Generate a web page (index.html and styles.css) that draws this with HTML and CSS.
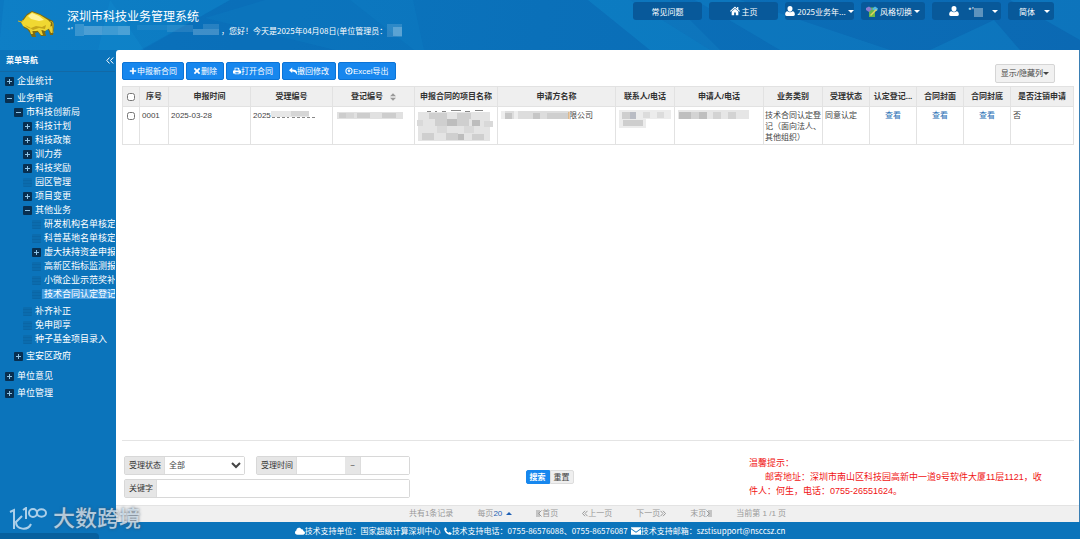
FILE: index.html
```html
<!DOCTYPE html>
<html lang="zh-CN">
<head>
<meta charset="utf-8">
<title>深圳市科技业务管理系统</title>
<link rel="stylesheet" href="styles.css">
</head>
<body>
<svg class="defs" aria-hidden="true">
  <symbol id="plus" viewBox="0 0 10 10"><path d="M4 1h2v3h3v2H6v3H4V6H1V4h3z"/></symbol>
  <symbol id="times" viewBox="0 0 10 10"><path d="M2.500 1 5 3.300 7.500 1 9 2.500 6.700 5 9 7.500 7.500 9 5 6.700 2.500 9 1 7.500 3.300 5 1 2.500z"/></symbol>
  <symbol id="print" viewBox="0 0 10 10"><path fill-rule="evenodd" d="M2 1h5l1 1v2h1l1 1v3H8v1H2V8H0V5l1-1h1zM3 2v2.500h4V3H6V2zM3 6.500V8h4V6.500z"/></symbol>
  <symbol id="reply" viewBox="0 0 10 10"><path d="M0 4 4 .500V3c4 0 6 1.500 6 4 0 1-.4 2-1 2.500C9 6.500 7 5.500 4 5.500v2z"/></symbol>
  <symbol id="circle-down" viewBox="0 0 10 10"><path fill-rule="evenodd" d="M5 .500a4.500 4.500 0 1 1 0 9 4.500 4.500 0 0 1 0-9zm0 1.300a3.200 3.200 0 1 0 0 6.400 3.200 3.200 0 0 0 0-6.400zM4 3h2v1.500h1.300L5 7 2.700 4.500H4z"/></symbol>
  <symbol id="home" viewBox="0 0 12 11"><path d="M6 0 0 5.500l.8.8L6 1.800l5.200 4.500.8-.8-2-1.800V.800H8.500v1.600zM6 2.800 2 6.200V10.500h3V7.300h2v3.200h3V6.200z"/></symbol>
  <symbol id="user" viewBox="0 0 12 12"><path d="M6 0c2 0 3 1.400 3 3.200S7.900 6.800 6 6.800 3 5 3 3.200 4 0 6 0zM3 6.300c1.600 1.700 4.400 1.700 6 0 2 .2 2.800 1.700 2.800 3.700 0 1.200-.6 2-1.800 2H2C.8 12 .2 11.200.2 10 .2 8 1 6.500 3 6.300z"/></symbol>
  <symbol id="cloud" viewBox="0 0 12 9"><path d="M3 9C1 9 0 7.800 0 6.300c0-1.200.8-2 1.600-2.300C1.600 1.800 3 .500 4.800.500c1.500 0 2.500.8 3 2 1.400-.4 2.400.6 2.200 2 1.300.2 2 1.100 2 2.200C12 8 11 9 9.700 9z"/></symbol>
  <symbol id="phone" viewBox="0 0 10 10"><path d="M.5 1.500C1 .800 1.600.500 2.300.300L3.700 3l-1 1.200C3.300 5.600 4.400 6.700 5.800 7.300L7 6.300l2.700 1.400c-.2.700-.5 1.300-1.200 1.800C7.500 10 6 9.600 4.500 8.700 3 7.800 2 6.800 1.300 5.500.4 4 0 2.500.5 1.500z"/></symbol>
  <symbol id="mail" viewBox="0 0 12 9"><path d="M0 0h12v1.200L6 5.300 0 1.200zM0 2.500l6 4 6-4V9H0z"/></symbol>
</svg>

<header class="top">
  <svg class="facets" viewBox="0 0 1080 50" preserveAspectRatio="none" aria-hidden="true">
    <path fill="#1598d8" fill-opacity=".22" d="M4 0h106l34 50H0V38z"/>
    <path fill="#1598d8" fill-opacity=".2" d="M110 0h120l-90 50H98z"/>
    <path fill="#0559a6" fill-opacity=".18" d="M230 0h120l64 50H142z"/>
    <path fill="#1598d8" fill-opacity=".14" d="m205 18 60-18h148l11 50H335z"/>
    <path fill="#1598d8" fill-opacity=".3" d="M588 0h42l80 50h-60z"/>
    <path fill="#1fa0dc" fill-opacity=".15" d="M630 0h40l50 50h-10z"/>
    <path fill="#1598d8" fill-opacity=".22" d="m695 0 45 0 150 50h-110z"/>
    <path fill="#1598d8" fill-opacity=".25" d="m930 50 64-30 26 30zM1010 0h70v40z"/>
  </svg>
  <svg class="bull" viewBox="0 0 38 28" role="img" aria-label="金牛标志">
    <path fill="#7d6a10" d="M0 10.500 4 12l2-3 4-5 5-3 8 3 9 5 4 2 1 5-1 9h-3l-1-4-2-2-2 3 1 4h-5l-3-4-3 1 1 4h-4l-2-4-3-4-3-1-1-3-3-3z"/>
    <path fill="#f0d832" d="m4 12.500 3-3 3-4L15 2l8 3 8 5 3 3-1 5-5 3-3-1-6 1-5 0-4-3-4-2-1-2z"/>
    <path fill="#fff49a" d="m11 6 4-3 7 3 5 4-5 1-8-2z"/>
    <path fill="#c6a51b" d="m8 15 6 3 5-2 6 1 4-2-1 4-6-1-6 2-6-3z"/>
    <path fill="#e9cf36" d="m12 18 2 6h2l-1-5zM20 20l4 5h2l-2-6zM31 17l3 6h1l0-7z"/>
    <path fill="none" stroke="#d4b92b" d="M33 12c2-1 3 0 3 3s-1 5 0 8M1 11l4 1 1-2"/>
  </svg>
  <div class="brand">
    <h1>深圳市科技业务管理系统</h1>
    <p class="hello"><span>*'</span>
      <svg class="name-mask" viewBox="0 0 148 13" aria-hidden="true"><g fill="#fff">
        <path fill-opacity=".18" d="M2 0h9v12H2z"/><path fill-opacity=".26" d="M11 2h18v9H11z"/><path fill-opacity=".2" d="M29 2h16v9H29z"/><path fill-opacity=".25" d="M45 2h12v9H45z"/><path fill-opacity=".06" d="M64 1h30v5H64z"/><path fill-opacity=".1" d="M94 1h26v7H94z"/><path fill-opacity=".22" d="M120 5h26v6h-26z"/><path fill-opacity=".12" d="M130 0h16v5h-16z"/></g></svg>
      <span>，您好！今天是2025年04月08日(单位管理员：</span>
      <svg class="role-mask" viewBox="0 0 15 13" aria-hidden="true"><path fill="#fff" fill-opacity=".14" d="M0 0h15v13H0z"/><path fill="#fff" fill-opacity=".22" d="M6 3h9v9H6z"/></svg>
    </p>
  </div>
  <nav class="tools" aria-label="快捷操作">
    <button type="button">常见问题</button>
    <button type="button"><svg class="ico"><use href="#home"/></svg>主页</button>
    <button type="button"><svg class="ico"><use href="#user"/></svg>2025业务年...<i class="caret"></i></button>
    <button type="button" class="t-theme">
      <svg class="shirt" viewBox="0 0 12 11" aria-hidden="true"><path fill="#69b84b" d="M3 1.500h6V11H3z"/><path fill="#8d7bd0" d="M0 2 3 .500 6 3 3 6 0 4z"/><path fill="#4fb8e8" d="m9 .500 3 2-1 2.500-2 0-3-2z"/><path fill="#e8d45c" d="m4 9 6-6 1 1-6 6z"/></svg>
      风格切换<i class="caret"></i></button>
    <button type="button" class="t-user"><svg class="ico"><use href="#user"/></svg><span>*'<svg class="u-mask" viewBox="0 0 9 9" aria-hidden="true"><path fill="#fff" fill-opacity=".35" d="M0 0h9v9H0z"/></svg></span><i class="caret"></i></button>
    <button type="button" class="t-lang">简体<i class="caret"></i></button>
  </nav>
</header>

<div class="body">
  <aside class="side">
    <div class="side-head"><h2>菜单导航</h2><button type="button" aria-label="收起菜单"><svg viewBox="0 0 8 7"><path d="M3.500.500.800 3.500l2.700 3M7.200.500 4.500 3.500l2.700 3"/></svg></button></div>
    <ul class="tree">
      <li><a href="#" class="plus">企业统计</a></li>
      <li><a href="#" class="minus">业务申请</a>
        <ul>
          <li><a href="#" class="minus">市科技创新局</a>
            <ul>
              <li><a href="#" class="plus">科技计划</a></li>
              <li><a href="#" class="plus">科技政策</a></li>
              <li><a href="#" class="plus">训力券</a></li>
              <li><a href="#" class="plus">科技奖励</a></li>
              <li><a href="#" class="leaf">园区管理</a></li>
              <li><a href="#" class="plus">项目变更</a></li>
              <li><a href="#" class="minus">其他业务</a>
                <ul>
                  <li><a href="#" class="leaf">研发机构名单核定</a></li>
                  <li><a href="#" class="leaf">科普基地名单核定</a></li>
                  <li><a href="#" class="plus">虚大扶持资金申报</a></li>
                  <li><a href="#" class="leaf">高新区指标监测报</a></li>
                  <li><a href="#" class="leaf">小微企业示范奖补</a></li>
                  <li><a href="#" class="leaf"><span class="on">技术合同认定登记</span></a></li>
                </ul>
              </li>
              <li><a href="#" class="leaf">补齐补正</a></li>
              <li><a href="#" class="leaf">免申即享</a></li>
              <li><a href="#" class="leaf">种子基金项目录入</a></li>
            </ul>
          </li>
          <li><a href="#" class="plus">宝安区政府</a></li>
        </ul>
      </li>
      <li><a href="#" class="plus">单位意见</a></li>
      <li><a href="#" class="plus">单位管理</a></li>
    </ul>
  </aside>

  <main class="main">
    <div class="bar">
      <div class="acts">
        <button type="button"><svg class="ico"><use href="#plus"/></svg>申报新合同</button>
        <button type="button"><svg class="ico"><use href="#times"/></svg>删除</button>
        <button type="button"><svg class="ico"><use href="#print"/></svg>打开合同</button>
        <button type="button"><svg class="ico"><use href="#reply"/></svg>撤回修改</button>
        <button type="button"><svg class="ico"><use href="#circle-down"/></svg>Excel导出</button>
      </div>
      <button type="button" class="cols">显示/隐藏列<i class="caret"></i></button>
    </div>

    <div class="grid">
      <table>
        <colgroup><col class="w17"><col class="w29"><col class="w82"><col class="w82"><col class="w82"><col class="w83"><col class="w118"><col class="w59"><col class="w89"><col class="w59"><col class="w47"><col class="w47"><col class="w47"><col class="w47"><col></colgroup>
        <thead>
          <tr><th><input type="checkbox" aria-label="全选"></th><th>序号</th><th>申报时间</th><th>受理编号</th><th>登记编号<svg class="sort" viewBox="0 0 6 8"><path d="M0 3.300 3 .300l3 3zM0 4.700l3 3 3-3z"/></svg></th><th>申报合同的项目名称</th><th>申请方名称</th><th>联系人/电话</th><th>申请人/电话</th><th>业务类别</th><th>受理状态</th><th>认定登记...</th><th>合同封面</th><th>合同封底</th><th>是否注销申请</th></tr>
        </thead>
        <tbody>
          <tr>
            <td class="mid"><input type="checkbox" aria-label="选择 0001"></td>
            <td>0001</td>
            <td>2025-03-28</td>
            <td>2025<svg class="m-no" viewBox="0 0 46 8" aria-hidden="true"><path fill="#e7e7e7" d="M0 0h38v6H0z"/><path fill="#d6d6d6" d="M20 0h18v5H20z"/><path fill="#888" d="M1 6h3v1H1zm5 0h3v1H6zm5 0h3v1h-3zm5 0h2v1h-2zm5 0h3v1h-3zm5 0h3v1h-3zm5 0h3v1h-3zm5 0h3v1h-3zm5 0h3v1h-3z"/></svg></td>
            <td><svg class="m-reg" viewBox="0 0 66 7" aria-hidden="true"><path fill="#e1e1e1" d="M0 0h66v7H0z"/><path fill="#cdcdcd" d="M2 1h7v5H2zm18 0h13v5H20zm25 0h14v5H45z"/><path fill="#d6d6d6" d="M9 1h8v5H9z"/></svg></td>
            <td><svg class="m-proj" viewBox="0 0 77 32" aria-hidden="true"><path fill="#888" d="M10 1h4v1h-4zm8 0h2v1h-2zm7 0h4v1h-4zm9-1h10v1H34zm14 1h5v1h-5zm10-1h8v1h-8z"/><path fill="#e4e4e4" d="M1 2h72v29H1z"/><path fill="#cfcfcf" d="M12 3h18v6H12zm28 0h14v6H40zM18 9h12v7H18zm22 0h12v7H40zm-35 14h12v7H5zm24 0h12v7H29zm26 1h12v6H55z"/><path fill="#bdbdbd" d="M30 9h10v7H30zm25 1h8v6h-8zM41 24h6v6h-6z"/><path fill="#d9d9d9" d="M0 10h6v6H0zm47 6h10v7H47zM20 16h10v7H20zm47-5h9v6h-9z"/></svg></td>
            <td><svg class="m-org" viewBox="0 0 68 8" aria-hidden="true"><path fill="#ddd" d="M0 0h68v8H0z"/><path fill="#eee" d="M0 0h4v8H0zm13 0h4v8h-4z"/><path fill="#c6c6c6" d="M4 2h7v6H4zm28 0h7v6h-7z"/><path fill="#cfcfcf" d="M46 2h21v6H46z"/><path fill="#d9b98e" d="M67 1h1v7h-1z"/></svg>限公司</td>
            <td><svg class="m-tel" viewBox="0 0 52 19" aria-hidden="true"><path fill="#ececec" d="M0 0h52v9H0zM0 9h27v9H0z"/><path fill="#cecece" d="M3 2h14v7H3zm1 8h20v6H4z"/><path fill="#b9bcc4" d="M11 2h6v7h-6z"/><path fill="#dcdcdc" d="M24 2h7v6h-7zm14 0h7v6h-7z"/></svg></td>
            <td><svg class="m-app" viewBox="0 0 71 9" aria-hidden="true"><path fill="#e6e6e6" d="M0 0h71v9H0z"/><path fill="#bfbfbf" d="M1 2h12v7H1zm20 0h8v7h-8z"/><path fill="#d3d3d3" d="M13 2h8v7h-8zm22 0h8v7h-8zm15 0h8v7h-8z"/></svg></td>
            <td class="kind">技术合同认定登记（面向法人、其他组织）</td>
            <td>同意认定</td>
            <td class="mid"><a href="#">查看</a></td>
            <td class="mid"><a href="#">查看</a></td>
            <td class="mid"><a href="#">查看</a></td>
            <td>否</td>
          </tr>
        </tbody>
      </table>
    </div>

    <form class="query">
      <div class="fields">
        <div class="field f-state"><label for="state">受理状态</label><select id="state"><option>全部</option></select></div>
        <div class="field f-date"><label for="from">受理时间</label><input id="from" type="text"><span class="tilde">~</span><input type="text" aria-label="受理时间止"></div>
        <div class="field f-key"><label for="key">关键字</label><input id="key" type="text"></div>
      </div>
      <div class="go"><button type="button" class="search">搜索</button><button type="reset">重置</button></div>
      <div class="tip"><p>温馨提示：</p><p class="addr">邮寄地址：深圳市南山区科技园高新中一道9号软件大厦11层1121，收件人：何生，电话：0755-26551624。</p></div>
    </form>

    <nav class="pager" aria-label="分页">
      <span>共有1条记录</span>
      <span>每页<a href="#">20<i class="up"></i></a></span>
      <span><svg class="pg" viewBox="0 0 6 7"><path d="M1 0v7M5.500.500 2.500 3.500l3 3M3 0v7"/></svg>首页</span>
      <span><svg class="pg" viewBox="0 0 6 7"><path d="M3 .800.500 3.500 3 6.200M5.500.800 3 3.500l2.500 2.700"/></svg>上一页</span>
      <span>下一页<svg class="pg" viewBox="0 0 6 7"><path d="M3 .800 5.500 3.500 3 6.200M.5.800 3 3.500.5 6.200"/></svg></span>
      <span>末页<svg class="pg" viewBox="0 0 6 7"><path d="M5 0v7M.5.500l3 3-3 3M3 0v7"/></svg></span>
      <span>当前第 1 /1 页</span>
    </nav>
  </main>
</div>

<footer class="foot">
  <span><svg class="ico wide"><use href="#cloud"/></svg>技术支持单位：国家超级计算深圳中心</span>
  <span><svg class="ico"><use href="#phone"/></svg>技术支持电话：0755-86576088、0755-86576087</span>
  <span><svg class="ico wide"><use href="#mail"/></svg>技术支持邮箱：szstisupport@nsccsz.cn</span>
</footer>

<div class="status"></div>
<div class="mark">
  <svg viewBox="0 0 38 24" aria-hidden="true"><path d="M1 5l4-2v19M13 9l-6 6c0 8 12 9 15 2M14 3l3-2v11"/><path d="M28 6a4 4 0 1 0-8 0 4 4 0 0 0 8 0c0-5 9-5 9 0s-9 5-9 0z"/></svg>
  <span>大数跨境</span>
</div>
</body>
</html>
```
FILE: styles.css
```css
* { box-sizing: border-box; }

body {
  margin: 0;
  height: 100vh;
  display: flex;
  flex-direction: column;
  overflow: hidden;
  background: #0b74bb;
  color: #444;
  font: 8px/11px "Liberation Sans", "Noto Sans CJK SC", sans-serif;
}

h1, h2, p, ul { margin: 0; padding: 0; font-weight: normal; }
ul { list-style: none; }
a { text-decoration: none; }
button, input, select { font: inherit; color: inherit; margin: 0; }
button { cursor: pointer; }
.defs { position: absolute; width: 0; height: 0; }
.ico { width: 8px; height: 8px; fill: currentColor; flex: none; }
.wide { width: 10px; }

.caret {
  border: 3px solid transparent;
  border-top-color: currentColor;
  border-bottom: 0;
}

/* header */
.top {
  position: relative;
  flex: none;
  height: 50px;
  display: flex;
  align-items: flex-start;
  background: linear-gradient(100deg, #0c79c2, #0a70b9 50%, #0b69b3);
  color: #fff;
  font-family: "Noto Sans CJK SC", sans-serif;
}
.facets { position: absolute; inset: 0; width: 100%; height: 100%; }
.bull { position: relative; width: 38px; height: 28px; margin: 10px 0 0 17px; flex: none; }
.brand { position: relative; margin: 8px 0 0 12px; flex: 1; white-space: nowrap; }
.brand h1 { font-size: 12px; line-height: 16px; }
.hello { display: flex; align-items: center; height: 13px; }
.name-mask { width: 148px; height: 13px; }
.role-mask { width: 15px; height: 13px; }

.tools { position: relative; display: flex; gap: 7px; padding: 2px 26px 0 0; }
.tools button {
  display: flex;
  align-items: center;
  justify-content: center;
  gap: 2px;
  width: 69px;
  height: 18px;
  padding: 0 2px;
  border: 0;
  border-radius: 3px;
  background: #08599a;
  color: #fff;
  white-space: nowrap;
}
.tools .ico { width: 10px; height: 10px; }
.tools .t-theme { width: 64px; }
.shirt { width: 12px; height: 11px; }
.tools .t-user { justify-content: space-between; padding: 0 3px 0 17px; }
.tools .t-lang { width: 46px; justify-content: space-between; padding: 0 4px 0 11px; }
.u-mask { width: 9px; height: 9px; vertical-align: middle; }

/* layout */
.body { flex: 1; min-height: 0; display: flex; }

/* sidebar */
.side { width: 115px; flex: none; overflow: hidden; color: #fff; }
.side-head {
  display: flex;
  justify-content: space-between;
  align-items: center;
  height: 22px;
  padding: 0 1px 0 6px;
  border-bottom: 1px solid #1269a6;
}
.side-head h2 { font-size: 8px; font-weight: bold; }
.side-head button { display: flex; padding: 0; border: 0; background: none; }
.side-head svg { width: 8px; height: 7px; fill: none; stroke: #fff; }
.tree { padding: 2px 0 0 5px; font-size: 9px; white-space: nowrap; }
.tree > li { margin-bottom: 3px; }
.tree ul { padding: 0 0 3px 9px; }
.tree a { display: flex; align-items: center; gap: 3px; height: 14px; color: #fff; }
.tree a::before { content: ""; width: 9px; height: 9px; flex: none; border-radius: 1px; }
.tree .plus::before {
  background:
    linear-gradient(#8fc4e6, #8fc4e6) center / 5px 1px no-repeat,
    linear-gradient(#8fc4e6, #8fc4e6) center / 1px 5px no-repeat,
    #082f50;
}
.tree .minus::before { background: linear-gradient(#8fc4e6, #8fc4e6) center / 5px 1px no-repeat, #082f50; }
.tree .leaf::before { background: repeating-linear-gradient(#0b6cae 0 2px, #0a66a6 2px 3px); }
.on { padding: 0 2px; margin-left: -2px; line-height: 10px; background: #3f9be0; }

/* work area */
.main {
  flex: 1;
  min-width: 0;
  display: flex;
  flex-direction: column;
  margin-left: 1px;
  background: #fff;
  border-right: 1px solid #3a7fb4;
  border-top-left-radius: 3px;
}
.bar { display: flex; justify-content: space-between; padding: 12px 24px 3px 6px; }
.acts { display: flex; gap: 2px; }
.acts button {
  display: flex;
  align-items: center;
  height: 18px;
  padding: 0 6px;
  border: 1px solid #0c74d6;
  border-radius: 2px;
  background: #1787ee;
  color: #fff;
}
.cols {
  display: flex;
  align-items: center;
  height: 19px;
  margin-top: 2px;
  padding: 0 5px;
  border: 1px solid #d5d5d5;
  border-radius: 2px;
  background: #f1f1f1;
}

.grid { flex: 1; margin: 0 5px 0 6px; border-bottom: 1px solid #e4e4e4; }
table { width: 100%; table-layout: fixed; border-collapse: collapse; border: 1px solid #ddd; }
.w17 { width: 17px; } .w29 { width: 29px; } .w47 { width: 47px; } .w59 { width: 59px; }
.w82 { width: 82px; } .w83 { width: 83px; } .w89 { width: 89px; } .w118 { width: 118px; }
th, td { border: 1px solid #e2e2e2; padding: 0; }
th { height: 20px; background: #efefef; color: #333; white-space: nowrap; }
td { height: 38px; padding: 3px 0 1px 2px; vertical-align: top; }
td.kind { padding-left: 1px; }
td.mid { padding-left: 0; text-align: center; }
.mid a { color: #2a6fb5; }
input[type="checkbox"] { width: 8px; height: 8px; vertical-align: middle; }
.sort { width: 6px; height: 8px; margin-left: 7px; fill: #999; vertical-align: middle; }
td svg { vertical-align: top; }
.m-no { width: 46px; height: 8px; margin-top: 1px; }
.m-reg { width: 66px; height: 7px; margin: 2px 0 0 2px; }
.m-proj { width: 77px; height: 32px; }
.m-org { width: 68px; height: 8px; margin: 1px 0 0 1px; }
.m-tel { width: 52px; height: 19px; margin-left: 1px; }
.m-app { width: 71px; height: 9px; margin-left: 1px; }

/* query form */
.query {
  display: grid;
  grid-template-columns: 286px 1fr 330px;
  padding: 15px 0 7px 8px;
}
.fields { display: flex; flex-wrap: wrap; gap: 3px 11px; }
.field { display: flex; height: 19px; border: 1px solid #d8d8d8; border-radius: 2px; }
.field label, .tilde { display: flex; align-items: center; padding: 0 3px; background: #e6e6e6; color: #333; border-right: 1px solid #ddd; }
.field label { padding-left: 4px; white-space: nowrap; }
.field input, .field select { flex: 1; min-width: 0; width: 0; border: 0; background: #fff; }
.f-state { width: 121px; }
.f-date { width: 154px; }
.field .tilde { padding: 0 5px; }
.f-key { width: 286px; }
.go { display: flex; justify-content: center; align-items: flex-start; padding: 14px 60px 0 0; }
.go button { height: 14px; width: 24px; padding: 0; border: 1px solid #ddd; border-radius: 0 2px 2px 0; background: #efefef; }
.go .search { border-color: #1787ee; border-radius: 2px 0 0 2px; background: #1787ee; color: #fff; font-weight: bold; }
.tip { padding-right: 34px; color: #f01414; font-size: 9px; line-height: 14px; }
.addr { text-indent: 16px; }

.pager {
  display: flex;
  justify-content: center;
  gap: 24px;
  padding: 2px 0;
  height: 17px;
  border-top: 1px solid #e3e3e3;
  background: #f0f0f0;
  color: #999;
  line-height: 12px;
}
.pager a { color: #1d5fb4; }
.up { display: inline-block; margin-left: 4px; border: 3px solid transparent; border-bottom-color: currentColor; border-top: 0; vertical-align: middle; }
.pg { width: 6px; height: 7px; fill: none; stroke: #999; vertical-align: middle; }

.foot {
  flex: none;
  display: flex;
  justify-content: center;
  align-items: center;
  gap: 3px;
  height: 17px;
  color: #fff;
  font-family: "Noto Sans CJK SC", sans-serif;
  white-space: nowrap;
}
.foot span { display: flex; align-items: center; }

/* overlays */
.status { position: absolute; left: 0; bottom: 0; width: 99px; height: 6px; border-radius: 0 4px 0 0; background: #07609e; }
.mark {
  position: absolute;
  left: 9px;
  bottom: 6px;
  display: flex;
  align-items: center;
  gap: 6px;
  color: rgba(225, 238, 248, .75);
  font-size: 22px;
  font-weight: 500;
  line-height: 28px;
  text-shadow: 0 0 3px rgba(60, 80, 100, .9);
}
.mark svg { width: 38px; height: 24px; fill: none; stroke: currentColor; stroke-width: 2; }
```
